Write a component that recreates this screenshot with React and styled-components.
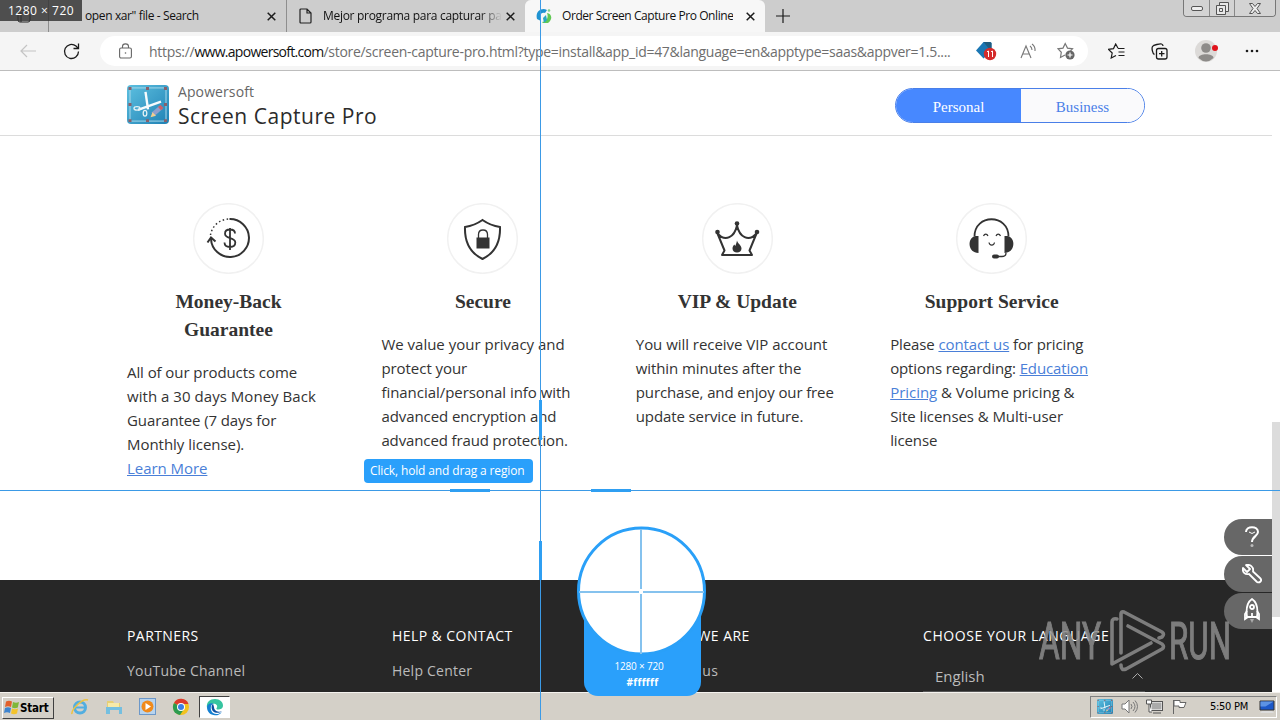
import React from "react";
import styled, { createGlobalStyle } from "styled-components";

const GlobalStyle = createGlobalStyle`
    * {
        box-sizing: border-box;
    }

    body {
        margin: 0;
        overflow: hidden;
        background: #fff;
        font-family: "Open Sans", "Noto Sans", sans-serif;
    }

    svg {
        display: block;
        flex: none;
    }
`

const features = [
    {
        icon: "money",
        title: ["Money-Back", "Guarantee"],
        lines: ["All of our products come", "with a 30 days Money Back", "Guarantee (7 days for", "Monthly license).", <a key="l">Learn More</a>],
        spacing: [-0.08, 0.04, -0.1, -0.03, -0.05],
    },
    {
        icon: "shield",
        title: ["Secure"],
        lines: ["We value your privacy and", "protect your", "financial/personal info with", "advanced encryption and", "advanced fraud protection."],
        spacing: [0, -0.05, -0.04, -0.08, -0.12],
    },
    {
        icon: "crown",
        title: ["VIP & Update"],
        lines: ["You will receive VIP account", "within minutes after the", "purchase, and enjoy our free", "update service in future."],
        spacing: [-0.04, -0.1, -0.12, -0.11],
    },
    {
        icon: "support",
        title: ["Support Service"],
        lines: [
            <React.Fragment key="a">Please <a>contact us</a> for pricing</React.Fragment>,
            <React.Fragment key="b">options regarding: <a>Education</a></React.Fragment>,
            <React.Fragment key="c"><a>Pricing</a> &amp; Volume pricing &amp;</React.Fragment>,
            "Site licenses & Multi-user",
            "license",
        ],
        spacing: [-0.11, -0.13, -0.04, -0.08, -0.12],
    },
]

const FeatureIcon = ({ name }) => (
    <svg width="71" height="71" viewBox="0 0 71 71" fill="none" stroke="#333" strokeWidth="2">
        <circle cx="35.500" cy="35.500" r="34.800" stroke="#f1f1f1" strokeWidth="1.500" />
        {name === "money" && (
            <>
                <path d="M36.500 16a19 19 0 1 1 -18.500 20" />
                <path d="M17.500 32a19 19 0 0 1 19 -16" strokeDasharray="1.500 2.500" strokeWidth="1.500" />
                <path d="M14.500 39.500L18 34.500L22.500 38.500" />
                <path d="M42 30.500c0-3-2.500-4-5-4c-3 0-5 1.500-5 4.200c0 5.800 10.300 3 10.300 8.800c0 3-2.300 4.500-5.300 4.500c-3 0-5.500-1-5.500-4.500M37 25v22" strokeWidth="1.800" />
            </>
        )}
        {name === "shield" && (
            <>
                <path d="M35.500 17c5 3.500 11 6 17.500 7c.5 14-3.500 25-17.500 32c-14-7-18-18-17.500-32c6.500-1 12.500-3.500 17.500-7z" />
                <path d="M29.500 34.500h13v11h-13z" fill="#333" stroke="none" />
                <path d="M31.500 35v-3.500c0-6 9-6 9 0v3.500" strokeWidth="1.300" />
            </>
        )}
        {name === "crown" && (
            <>
                <path d="M15.500 30.500L22.500 47.500L20 52h30l-2.500-4.500L54.500 30.500c-8 9-17 3.500-19.500-8c-2.500 11.500-11.500 17-19.500 8z" strokeLinejoin="round" />
                <circle cx="15.500" cy="29" r="2.300" fill="#333" stroke="none" />
                <circle cx="35" cy="20.500" r="2.300" fill="#333" stroke="none" />
                <circle cx="55" cy="29" r="2.300" fill="#333" stroke="none" />
                <path d="M35 37.500c.5 3 4.500 4.500 4.500 8c0 2.500-2 4-4.500 4s-4.500-1.500-4.500-4c0-2 1-3 1.800-4l1 1.500c.7-2 1.200-3 1.700-5.500z" fill="#333" stroke="none" />
            </>
        )}
        {name === "support" && (
            <>
                <path d="M18.500 33.500c0-23 34-23 34 0" strokeWidth="1.800" />
                <path d="M22.500 33v17c-10.500 0-12-15-3-17zM48.500 33v17c10.500 0 12-15 3-17z" fill="#333" stroke="none" />
                <path d="M50 50c0 2.500-1 3.500-4 3.500h-5" strokeWidth="1.300" />
                <rect x="36" y="51.500" width="7" height="4" rx="2" fill="#333" stroke="none" />
                <path d="M27.500 33c1-2.500 3.500-2.500 4.500 0M40 33c1-2.500 3.500-2.500 4.500 0M33 39.500c.5 3.500 5 3.500 5.500 0" strokeWidth="1.200" />
            </>
        )}
    </svg>
)

const AppLogo = ({ width, height }) => (
    <svg width={width} height={height} viewBox="0 0 42 40" preserveAspectRatio="none">
        <defs>
            <linearGradient id="logoFill" x1="0" y1="0" x2="1" y2="1">
                <stop offset="0" stopColor="#5dc0e0" />
                <stop offset="1" stopColor="#2081b4" />
            </linearGradient>
        </defs>
        <rect width="42" height="40" rx="4" fill="url(#logoFill)" />
        <rect x="3" y="3" width="36" height="34" fill="none" stroke="#a9d8ea" />
        <path d="M18.500 7l2.500 18M34 17l-23 8.500" stroke="#f6fbfd" strokeWidth="2.400" />
        <ellipse cx="10" cy="24" rx="3" ry="1.800" fill="none" stroke="#e4f2f6" strokeWidth="1.300" />
        <ellipse cx="18" cy="29" rx="1.800" ry="3" fill="none" stroke="#e4f2f6" strokeWidth="1.300" />
        <path d="M34 23l-8 7" stroke="#8f9fce" strokeWidth="4.500" />
        <path d="M35 22l-2.500 2.200" stroke="#c9636a" strokeWidth="4.500" />
        <path d="M23.500 33l2-5 3.500 3.500z" fill="#f2cf8f" />
        <path d="M1.500 2h3v3h-3zM19 2h3v3h-3zM37 2h3v3h-3zM1.500 18.500h3v3h-3zM37 18.500h3v3h-3zM1.500 35h3v3h-3zM19 35h3v3h-3zM37 35h3v3h-3z" fill="#87616c" />
    </svg>
)

const EdgeLogo = ({ size }) => (
    <svg width={size} height={size} viewBox="0 0 18 18">
        <path d="M1 10C0 4 4 1 9 1c5 0 8 3 8 6.500c0 3-2.500 4-5 4c-1.500 0-2-.6-1.300-1.500C12.500 7 9 5 6 6C3 7 2 9 1 10z" fill="#36c4a0" />
        <path d="M1 9.500c0-3 3-5 6-4c-3 2-3 7 0 9.500c3 2 7 1 9-1.500C14 17 11 17.500 9 17.300C4.500 17 1 14 1 9.500z" fill="#1580d2" />
        <path d="M7 5.500C4 9 6 14.500 10.500 14.800c2.500.2 4.500-.8 5.500-1.500c-2 1-8 .5-8-4.300z" fill="#0c4fa0" />
    </svg>
)

const CloseIcon = () => (
    <svg width="9" height="9" viewBox="0 0 9 9" stroke="#1b1b1b" strokeWidth="1.500">
        <path d="M.7.700l7.600 7.600M8.300.700L.7 8.300" />
    </svg>
)

const BrowserTabs = () => (
    <TabStrip>
        <WorkspaceSlot>
            <svg width="14" height="14" viewBox="0 0 14 14" fill="none" stroke="#222"><rect x="1" y="1" width="12" height="12" rx="2" /><path d="M1 4h12M4 4v9" /></svg>
        </WorkspaceSlot>
        <Tab $width="238px" $pad="36px">
            <TabLabel $ls="-0.380px">open xar" file - Search</TabLabel>
            <TabClose><CloseIcon /></TabClose>
        </Tab>
        <Tab $width="239px" $pad="12px">
            <svg width="13" height="16" viewBox="0 0 13 16" fill="none" stroke="#222" strokeWidth="1.200"><path d="M1 2q0-1 1-1h6l4 4v9q0 1-1 1H2q-1 0-1-1zM8 1v4h4" /></svg>
            <TabLabel $gap="11px" $ls="-0.300px" $fade>Mejor programa para capturar pa</TabLabel>
            <TabClose><CloseIcon /></TabClose>
        </Tab>
        <Tab $width="240px" $pad="10px" $active>
            <svg width="16" height="16" viewBox="0 0 16 16">
                <path d="M1 11C-1 4 5-1 11 2l-2 3C5 4 3 7 5 13z" fill="#1f93d2" />
                <path d="M11 5c5 1 6 6 1 10H7l-1-1c4 0 7-4 5-9z" fill="#61c854" />
                <path d="M7 10l3-3 1 5-3 3z" fill="#2aa7c2" />
                <circle cx="13" cy="2.500" r="1.300" fill="#82d18a" />
            </svg>
            <TabLabel $gap="10px" $ls="-0.430px">Order Screen Capture Pro Online</TabLabel>
            <TabClose><CloseIcon /></TabClose>
        </Tab>
        <NewTab>
            <svg width="14" height="14" viewBox="0 0 14 14" stroke="#1b1b1b" strokeWidth="1.200"><path d="M7 0v14M0 7h14" /></svg>
        </NewTab>
        <WindowControls>
            <WindowButton $width="25px"><svg width="12" height="5" viewBox="0 0 12 5"><rect x=".5" y=".5" width="11" height="4" rx="1.500" fill="#eee" stroke="#555" /></svg></WindowButton>
            <WindowButton $width="25px"><svg width="13" height="13" viewBox="0 0 13 13" fill="#e8e8e8" stroke="#555"><path d="M3.500.500h9v9h-9z" /><path d="M.5 3.500h9v9h-9z" /><path d="M3.500 6.500h3v3h-3z" /></svg></WindowButton>
            <WindowButton $width="41px"><svg width="12" height="11" viewBox="0 0 12 11"><path d="M.5.500h3L6 3.500 8.500.500h3L8 5.500l3.500 5h-3L6 7.500l-2.500 3h-3L4 5.500z" fill="#eee" stroke="#555" /></svg></WindowButton>
        </WindowControls>
    </TabStrip>
)

const Toolbar = () => (
    <ToolbarRow>
        <BackSlot>
            <svg width="16" height="14" viewBox="0 0 16 14" fill="none" stroke="#c4c4c4" strokeWidth="1.200"><path d="M16 7H1M7 1L1 7l6 6" /></svg>
        </BackSlot>
        <ReloadSlot>
            <svg width="17" height="17" viewBox="0 0 17 17" fill="none" stroke="#1b1b1b" strokeWidth="1.300"><path d="M15.500 8.500a7 7 0 1 1-2.500-5.400l2 2M15.500 .5v5h-5" /></svg>
        </ReloadSlot>
        <AddressBar>
            <svg width="13" height="16" viewBox="0 0 13 16" fill="none" stroke="#666" strokeWidth="1.100"><rect x=".6" y="5" width="11.800" height="10" rx="1.500" /><path d="M3.500 5V3.500c0-3.500 6-3.500 6 0V5" /><circle cx="6.500" cy="10" r=".8" fill="#666" stroke="none" /></svg>
            <Url>https://<b>www.apowersoft.com</b>/store/screen-capture-pro.html?type=install&amp;app_id=47&amp;language=en&amp;apptype=saas&amp;appver=1.5....</Url>
            <AddressIcons>
                <svg width="21" height="20" viewBox="0 0 21 20">
                    <path d="M0 9.500L7.500 1H14q1.500 0 1.500 1.500V10l-8 7.500z" fill="#1b77b4" />
                    <path d="M7.500 1H14q1.500 0 1.500 1.500V10l-4-4z" fill="#1f5c80" />
                    <circle cx="14" cy="13" r="6.200" fill="#d52b2b" />
                    <path d="M11 10.700l1.500-.7v6M15 10.700l1.500-.7v6" fill="none" stroke="#fff" />
                </svg>
                <svg width="17" height="16" viewBox="0 0 17 16" fill="none" stroke="#777" strokeWidth="1.100"><path d="M1 15L6 3l5 12M2.800 11h6.400M10 3q2 1.500 2 4M12 1q3.500 2.500 3 7" /></svg>
                <svg width="18" height="18" viewBox="0 0 18 18" fill="none" stroke="#777" strokeWidth="1.200"><path d="M8 13l-4.500 2.500.8-5.200L1 6.800l5-.7L8.200 1.500l2.300 4.600 5 .7-2 2" /><circle cx="13" cy="13" r="4.600" fill="#666" stroke="none" /><path d="M13 10.500v5M10.500 13h5" stroke="#fff" /></svg>
            </AddressIcons>
        </AddressBar>
        <ToolbarIcons>
            <svg width="17" height="16" viewBox="0 0 17 16" fill="none" stroke="#1b1b1b" strokeWidth="1.200"><path d="M10 5.200L7.700 1 5.500 5.600l-5 .7L4.200 10l-1 5L8 12.500M10 5.500h6.500M10.500 9h6M10.500 12.500h6" /></svg>
            <svg width="17" height="17" viewBox="0 0 17 17" fill="none" stroke="#1b1b1b" strokeWidth="1.300"><rect x="5.500" y="5.500" width="10.500" height="10.500" rx="2" /><path d="M10.700 8v5.500M8 10.700h5.500M3.500 11.500C1.500 11 .5 5 1.500 3.500S9 .500 10.500 1s1.500 1.500 1.500 2" /></svg>
            <svg width="24" height="22" viewBox="0 0 24 22"><circle cx="11" cy="11" r="11" fill="#dcdad8" /><circle cx="11" cy="8" r="4.800" fill="#8d8b89" /><path d="M3.500 18c0-5 15-5 15 0q-7.500 7-15 0z" fill="#8d8b89" /><circle cx="20" cy="8" r="3" fill="#e0131b" /></svg>
            <svg width="14" height="4" viewBox="0 0 14 4" fill="#1b1b1b"><circle cx="2" cy="2" r="1.300" /><circle cx="7" cy="2" r="1.300" /><circle cx="12" cy="2" r="1.300" /></svg>
        </ToolbarIcons>
    </ToolbarRow>
)

const Features = () => (
    <FeatureGrid>
        {features.map(({ icon, title, lines, spacing }) => (
            <Feature key={icon}>
                <FeatureHead>
                    <FeatureIcon name={icon} />
                    <FeatureTitle>{title.map(line => <div key={line}>{line}</div>)}</FeatureTitle>
                </FeatureHead>
                {lines.map((line, i) => <FeatureLine key={i} $ls={spacing[i] + "px"}>{line}</FeatureLine>)}
            </Feature>
        ))}
    </FeatureGrid>
)

const Footer = () => (
    <FooterBar>
        <FooterColumn $width="265px">
            <FooterTitle>PARTNERS</FooterTitle>
            <FooterLink>YouTube Channel</FooterLink>
        </FooterColumn>
        <FooterColumn $width="266px">
            <FooterTitle>HELP &amp; CONTACT</FooterTitle>
            <FooterLink>Help Center</FooterLink>
        </FooterColumn>
        <FooterColumn $width="265px">
            <FooterTitle>WHO WE ARE</FooterTitle>
            <FooterLink>About us</FooterLink>
        </FooterColumn>
        <FooterColumn $width="222px">
            <FooterTitle $ls="0.560px">CHOOSE YOUR LANGUAGE</FooterTitle>
            <LanguageSelect>
                English
                <svg width="11" height="6" viewBox="0 0 11 6" fill="none" stroke="#aaa"><path d="M.5 5.500l5-5 5 5" /></svg>
            </LanguageSelect>
        </FooterColumn>
    </FooterBar>
)

const Watermark = () => (
    <WatermarkArt width="200" height="68" viewBox="0 0 200 68">
        <g fill="#8c8c8c" stroke="#8c8c8c" strokeWidth="1.200" fontFamily="Roboto, sans-serif" fontSize="51">
            <text x="2" y="51" textLength="62" lengthAdjust="spacingAndGlyphs">ANY</text>
            <text x="132" y="51" textLength="62" lengthAdjust="spacingAndGlyphs">RUN</text>
        </g>
        <g fill="none" stroke="#8c8c8c" strokeWidth="3.600" strokeLinejoin="round" strokeLinecap="round">
            <path d="M80 11q-5-1-5 3v42l39-21" />
            <path d="M84 45V6q0-3 3-2l38 20q3 2 0 5l-3 1" />
            <path d="M84 57q0 6 5 4l36-20q3-2 0-5L91 18" />
        </g>
    </WatermarkArt>
)

const SideTools = () => (
    <SideStack>
        <SideButton>
            <svg width="16" height="22" viewBox="0 0 16 22" fill="none" stroke="#fff" strokeWidth="2"><path d="M2 6c0-6.500 12-6.500 12 0c0 4-6 4.500-6 10" /><path d="M5 6q3 3 6 0" strokeWidth="1" /><circle cx="8" cy="19.500" r="1.500" fill="#bbb" stroke="none" /></svg>
        </SideButton>
        <SideButton>
            <svg width="20" height="20" viewBox="0 0 20 20" fill="none" stroke="#fff" strokeWidth="1.800" strokeLinejoin="round"><path d="M4 1l4 4-3 3-4-4C0 8 3 11 7 10l8 8q2 1 3.500-.5T18 14l-7-6.500C12 3 8 0 4 1z" /></svg>
        </SideButton>
        <SideButton>
            <svg width="16" height="26" viewBox="0 0 16 26" fill="none" stroke="#fff" strokeWidth="1.800"><path d="M8 1C2 5 2 12 3 19h10C14 12 14 5 8 1z" /><path d="M3 13l-2 3v5l3-2M13 13l2 3v5l-3-2M8 15v4" /><circle cx="8" cy="9" r="2" /><path d="M6 21h4l-2 4z" fill="#aaa" stroke="none" /></svg>
        </SideButton>
    </SideStack>
)

const Taskbar = () => (
    <TaskbarRow>
        <StartButton>
            <svg width="16" height="15" viewBox="0 0 16 15"><path d="M2 1.500q3-1.500 6 0L7 7Q4 5.500 1 7z" fill="#e2602c" /><path d="M9 2q3 1.500 6 0l-1.200 5.500q-3 1.500-5.800 0z" fill="#7fb73a" /><path d="M1 8q3-1.500 6 0l-1 5q-3-1.500-6 0z" fill="#3e84cf" /><path d="M8 8.500q3 1.500 6 0L13 13.500q-3 1.500-6 0z" fill="#f3c32c" /></svg>
            Start
        </StartButton>
        <QuickLaunch>
            <svg width="18" height="18" viewBox="0 0 18 18" fill="none"><circle cx="9" cy="9.500" r="5.500" stroke="#52aee0" strokeWidth="3" /><path d="M4 9.500h11" stroke="#52aee0" strokeWidth="2" /><path d="M1 16C0 12 11 0 17 2" stroke="#edc342" strokeWidth="1.600" /></svg>
            <svg width="18" height="18" viewBox="0 0 18 18"><path d="M2 3h6l1 2h6v5H2z" fill="#e6cf75" /><path d="M3 5h11v5H3z" fill="#f6eaa8" /><path d="M1 9h16v7h-3v-4H5v4H1z" fill="#74bfe0" /></svg>
            <svg width="17" height="17" viewBox="0 0 17 17"><rect x=".5" y=".5" width="16" height="16" fill="#b8d4ee" stroke="#6c98c9" /><circle cx="8.500" cy="8.500" r="6" fill="#f08a1b" /><path d="M6.500 5l5.500 3.500-5.500 3.500z" fill="#fff" /></svg>
            <svg width="18" height="18" viewBox="0 0 18 18"><circle cx="9" cy="9" r="8" fill="#f2c21e" /><path d="M9 9L2 5a8 8 0 0 1 14.500 1H9z" fill="#dc3b2e" /><path d="M9 9L2 5a8 8 0 0 0 6 12l4-6z" fill="#2c9b50" /><circle cx="9" cy="9" r="4" fill="#fff" /><circle cx="9" cy="9" r="3" fill="#3b7fe4" /></svg>
        </QuickLaunch>
        <ActiveTask><EdgeLogo size={18} /></ActiveTask>
        <Tray>
            <AppLogo width={16} height={15} />
            <svg width="17" height="15" viewBox="0 0 17 15" fill="none" stroke="#777"><path d="M1 5h3l4-4v13l-4-4H1z" fill="#fff" /><path d="M10 5q2 2.500 0 5M12 3q4 4.500 0 9M14 1.500q5 6 0 12" /></svg>
            <svg width="17" height="15" viewBox="0 0 17 15" fill="none" stroke="#555"><rect x="5" y="3" width="11" height="8" fill="#aaa" stroke="#fff" /><rect x="4.500" y="2.500" width="12" height="9" /><path d="M7 14h8" /><path d="M.5 1h5v4h-5zM3 5v8h3" fill="#fff" /></svg>
            <svg width="17" height="15" viewBox="0 0 17 15" fill="#fff" stroke="#666"><path d="M2.500 1v14M3 1.500h6v2h6l-2 5H8V7H3z" /></svg>
            <Clock>5:50 PM</Clock>
            <svg width="16" height="14" viewBox="0 0 16 14"><path d="M1 1h14v9H1z" fill="#1c58c8" stroke="#333" /><path d="M1.500 1.500h13l-8 5h-5z" fill="#5c93e4" /><path d="M3 11h10l2 2H1z" fill="#ddd" /></svg>
        </Tray>
    </TaskbarRow>
)

const CaptureOverlay = () => (
    <Overlay>
        <Guide $left="540px" $top="0" $width="1px" $height="720px" />
        <Guide $left="0" $top="490px" $width="1280px" $height="1px" />
        <Guide $left="539px" $top="400px" $width="3px" $height="40px" $bright />
        <Guide $left="539px" $top="541px" $width="3px" $height="39px" $bright />
        <Guide $left="450px" $top="489px" $width="40px" $height="3px" $bright />
        <Guide $left="591px" $top="489px" $width="40px" $height="3px" $bright />
        <SizeBadge>1280 × 720</SizeBadge>
        <Hint>Click, hold and drag a region</Hint>
        <MagnifierCard>
            <div>1280 × 720</div>
            <b>#ffffff</b>
        </MagnifierCard>
        <Lens width="130" height="130" viewBox="0 0 130 130">
            <circle cx="65.500" cy="65" r="63" fill="#fff" stroke="#2aa0f8" strokeWidth="3" />
            <path d="M65 3v60M65 68v60M3 66h60M67 66h61" stroke="#85c2ee" strokeWidth="2" />
        </Lens>
    </Overlay>
)

const App = () => {
    return (
        <Screen>
            <GlobalStyle />
            <BrowserTabs />
            <Toolbar />
            <Viewport>
                <Page>
                    <StoreHeader>
                        <LogoSlot><AppLogo width={42} height={39} /></LogoSlot>
                        <Brand>
                            <BrandOwner>Apowersoft</BrandOwner>
                            <BrandName>Screen Capture Pro</BrandName>
                        </Brand>
                        <PlanSwitch>
                            <Plan $active>Personal</Plan>
                            <Plan>Business</Plan>
                        </PlanSwitch>
                    </StoreHeader>
                    <Features />
                    <Footer />
                </Page>
                <Scrollbar><ScrollThumb /></Scrollbar>
                <SideTools />
                <Watermark />
            </Viewport>
            <Taskbar />
            <CaptureOverlay />
        </Screen>
    )
}

const Screen = styled.div`
    position: relative;
    width: 1280px;
    height: 720px;
    display: flex;
    flex-direction: column;
    overflow: hidden;
    white-space: nowrap;
`

const TabStrip = styled.div`
    height: 32px;
    display: flex;
    background: #cdcdcd;
`

const WorkspaceSlot = styled.div`
    width: 48px;
    display: flex;
    align-items: center;
    padding-left: 17px;
`

const Tab = styled.div`
    width: ${props => props.$width};
    height: 32px;
    padding: 0 10px 0 ${props => props.$pad};
    display: flex;
    align-items: center;
    border-left: 1px solid ${props => props.$active ? "#f7f7f7" : "#8e8e8e"};
    border-radius: ${props => props.$active ? "6px 6px 0 0" : "0"};
    background: ${props => props.$active ? "#f7f7f7" : "#cdcdcd"};
`

const TabLabel = styled.span`
    margin-left: ${props => props.$gap || 0};
    max-width: 180px;
    overflow: hidden;
    font-size: 12px;
    line-height: 18px;
    letter-spacing: ${props => props.$ls};
    color: #111;
    mask-image: ${props => props.$fade ? "linear-gradient(90deg, #000 88%, transparent)" : "none"};
`

const TabClose = styled.span`
    margin-left: auto;
`

const NewTab = styled.div`
    padding: 9px 0 0 11px;
`

const WindowControls = styled.div`
    height: 17px;
    margin: 0 4px 0 auto;
    display: flex;
    border: 1px solid #777;
    border-top: 0;
    border-radius: 0 0 4px 4px;
    overflow: hidden;
`

const WindowButton = styled.div`
    width: ${props => props.$width};
    display: flex;
    align-items: center;
    justify-content: center;
    background: #d3d3d3;

    & + & {
        border-left: 1px solid #888;
    }
`

const ToolbarRow = styled.div`
    height: 39px;
    display: flex;
    align-items: center;
    background: #f5f5f5;
    border-bottom: 1px solid #bdbdbd;
`

const BackSlot = styled.div`
    width: 63px;
    padding-left: 20px;
`

const ReloadSlot = styled.div`
    width: 37px;
`

const AddressBar = styled.div`
    width: 988px;
    height: 30px;
    padding: 0 13px 0 19px;
    display: flex;
    align-items: center;
    border-radius: 15px;
    background: #fff;
`

const Url = styled.span`
    margin-left: 17px;
    font-size: 14px;
    letter-spacing: -0.290px;
    color: #6e6e6e;

    b {
        font-weight: 400;
        letter-spacing: -0.720px;
        color: #111;
    }
`

const AddressIcons = styled.div`
    margin-left: auto;
    display: flex;
    align-items: center;
    gap: 20px;

    svg:first-child {
        margin-right: 3px;
    }
`

const ToolbarIcons = styled.div`
    flex: 1;
    padding: 0 21px 0 20px;
    display: flex;
    align-items: center;
    justify-content: space-between;
`

const Viewport = styled.div`
    position: relative;
    height: 621px;
    display: flex;
`

const Page = styled.div`
    width: 1272px;
    display: flex;
    flex-direction: column;
    color: #333;
`

const StoreHeader = styled.div`
    height: 65px;
    padding: 0 127px;
    display: flex;
    align-items: center;
    border-bottom: 1px solid #dcdcdc;
`

const LogoSlot = styled.div`
    padding-top: 2px;
`

const Brand = styled.div`
    margin-left: 9px;
    padding-top: 6px;
`

const BrandOwner = styled.div`
    font-size: 14px;
    line-height: 20px;
    letter-spacing: 0.100px;
    color: #666;
`

const BrandName = styled.div`
    font-size: 21px;
    line-height: 28px;
    letter-spacing: 0.520px;
    color: #2b2b2b;
`

const PlanSwitch = styled.div`
    width: 250px;
    height: 35px;
    margin: 4px 0 0 auto;
    display: grid;
    grid-template-columns: 125px 1fr;
    border: 1px solid #4a7fe8;
    border-radius: 18px;
    overflow: hidden;
`

const Plan = styled.div`
    display: flex;
    align-items: center;
    justify-content: center;
    padding-top: 4px;
    font-family: "Liberation Serif", serif;
    font-size: 15px;
    background: ${props => props.$active ? "#4788ff" : "#fafafc"};
    color: ${props => props.$active ? "#fff" : "#4a80e8"};
`

const FeatureGrid = styled.div`
    height: 444px;
    padding: 67px 0 0 127px;
    display: grid;
    grid-template-columns: repeat(4, 254.400px);
    align-items: start;
`

const Feature = styled.div`
    width: 203px;
`

const FeatureHead = styled.div`
    display: flex;
    flex-direction: column;
    align-items: center;
`

const FeatureTitle = styled.div`
    margin: 14px 0 16px;
    text-align: center;
    font-family: "Liberation Serif", serif;
    font-size: 19.500px;
    font-weight: 700;
    line-height: 28px;
`

const FeatureLine = styled.div`
    font-size: 15px;
    line-height: 24px;
    letter-spacing: ${props => props.$ls};

    a {
        color: #4a7fd8;
        text-decoration: underline;
    }
`

const FooterBar = styled.div`
    height: 112px;
    padding: 44px 0 0 127px;
    display: flex;
    background: #272727;
`

const FooterColumn = styled.div`
    width: ${props => props.$width};
`

const FooterTitle = styled.div`
    font-size: 14px;
    line-height: 24px;
    letter-spacing: ${props => props.$ls || "0.430px"};
    color: #fff;
`

const FooterLink = styled.div`
    margin-top: 12px;
    font-size: 14px;
    line-height: 22px;
    letter-spacing: 0.220px;
    color: #bbb;
`

const LanguageSelect = styled.div`
    height: 32px;
    margin-top: 12px;
    padding: 1px 2px 0 12px;
    display: flex;
    align-items: center;
    justify-content: space-between;
    border-bottom: 1px solid #555;
    font-size: 15px;
    color: #bbb;
`

const Scrollbar = styled.div`
    width: 8px;
    padding-top: 351px;
    background: #fff;
`

const ScrollThumb = styled.div`
    height: 195px;
    background: #dcdcdc;
`

const SideStack = styled.div`
    position: absolute;
    right: 8px;
    top: 448px;
    display: grid;
    gap: 1px;
`

const SideButton = styled.div`
    width: 48px;
    height: 36px;
    padding-left: 8px;
    display: flex;
    align-items: center;
    justify-content: center;
    border-radius: 18px 0 0 18px;
    background: #676767;
`

const WatermarkArt = styled.svg`
    position: absolute;
    left: 1037px;
    top: 537px;
    opacity: 0.850;
`

const TaskbarRow = styled.div`
    height: 28px;
    padding: 0 3px 0 2px;
    display: flex;
    align-items: center;
    background: #d4d0c8;
    border-top: 1px solid #f4f2ee;
`

const StartButton = styled.div`
    width: 52px;
    height: 22px;
    margin-top: 2px;
    padding-left: 1px;
    display: flex;
    align-items: center;
    border: 1px solid;
    border-color: #fff #404040 #404040 #fff;
    font-family: "DejaVu Sans Condensed", "DejaVu Sans", sans-serif;
    font-size: 11.500px;
    font-weight: 700;
    letter-spacing: -0.200px;
    color: #000;
`

const QuickLaunch = styled.div`
    margin-left: 17px;
    display: flex;
    align-items: center;
    gap: 16px;
`

const ActiveTask = styled.div`
    width: 31px;
    height: 22px;
    margin-left: 9px;
    display: flex;
    align-items: center;
    justify-content: center;
    border: 1px solid;
    border-color: #404040 #fff #fff #404040;
    background: #fff;
`

const Tray = styled.div`
    width: 187px;
    height: 22px;
    margin-left: auto;
    padding: 0 1px 0 6px;
    display: flex;
    align-items: center;
    gap: 8px;
    border: 1px solid;
    border-color: #808080 #fff #fff #808080;
`

const Clock = styled.span`
    margin: 0 3px 0 auto;
    font-family: "DejaVu Sans Condensed", "DejaVu Sans", sans-serif;
    font-size: 11px;
    letter-spacing: -0.250px;
    color: #000;
`

const Overlay = styled.div`
    position: absolute;
    inset: 0;
`

const Guide = styled.div`
    position: absolute;
    left: ${props => props.$left};
    top: ${props => props.$top};
    width: ${props => props.$width};
    height: ${props => props.$height};
    background: ${props => props.$bright ? "#2f9ff2" : "#3b9ae6"};
`

const SizeBadge = styled.div`
    position: absolute;
    left: 0;
    top: 0;
    width: 82px;
    height: 21px;
    padding-left: 8px;
    background: rgba(50, 50, 50, 0.820);
    color: #fff;
    font-size: 12px;
    line-height: 21px;
    letter-spacing: 0.500px;
`

const Hint = styled.div`
    position: absolute;
    left: 364px;
    top: 459px;
    width: 169px;
    height: 24px;
    padding-left: 6px;
    border-radius: 4px;
    background: #2aa0fb;
    color: #fff;
    font-size: 12px;
    line-height: 23px;
    letter-spacing: -0.140px;
`

const MagnifierCard = styled.div`
    position: absolute;
    left: 584px;
    top: 600px;
    width: 117px;
    height: 96px;
    padding-top: 58px;
    border-radius: 0 0 14px 14px;
    background: #2aa0fb;
    color: #fff;
    font-size: 10px;
    line-height: 16px;
    text-align: center;

    div {
        padding-right: 7px;
        letter-spacing: -0.200px;
    }

    b {
        letter-spacing: 0.300px;
    }
`

const Lens = styled.svg`
    position: absolute;
    left: 576px;
    top: 526px;
`

export default App
